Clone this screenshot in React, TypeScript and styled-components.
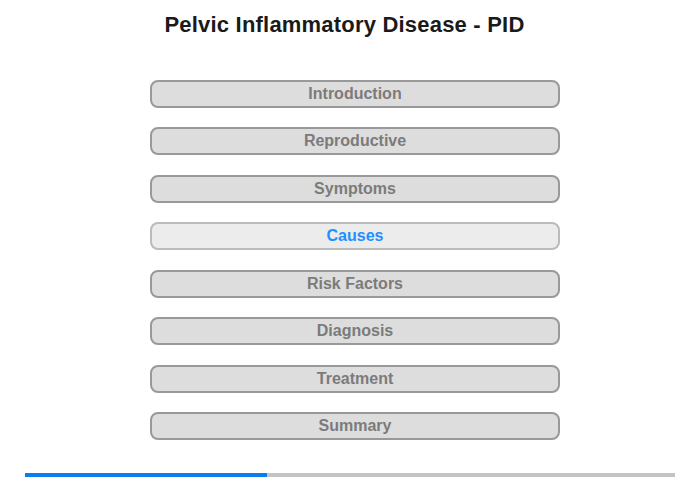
import React from "react";
import styled, { createGlobalStyle } from "styled-components";

const Global = createGlobalStyle`
  html, body { margin: 0; padding: 0; background: #fff; }
  body { font-family: "Liberation Sans", Arial, sans-serif; }
`;

const Page = styled.div`
  width: 700px;
  height: 480px;
  display: flex;
  flex-direction: column;
  align-items: center;
  box-sizing: border-box;
`;

const Title = styled.h1`
  margin: 12px 0 0 -11px;
  font-size: 22px;
  line-height: 26px;
  letter-spacing: 0.2px;
  font-weight: bold;
  color: #1a1a1a;
  text-align: center;
`;

const Menu = styled.nav`
  margin: 42px 0 0 10px;
  display: flex;
  flex-direction: column;
  gap: 19.43px;
`;

const Item = styled.div<{ $active?: boolean }>`
  box-sizing: border-box;
  width: 410px;
  height: 28px;
  border: 2px solid ${(p) => (p.$active ? "#bbbbbb" : "#999999")};
  border-radius: 8px;
  background: ${(p) => (p.$active ? "#ececec" : "#dddddd")};
  color: ${(p) => (p.$active ? "#1e90ff" : "#7b7b7b")};
  font-size: 16px;
  font-weight: bold;
  display: flex;
  align-items: center;
  justify-content: center;
  cursor: pointer;
`;

const Progress = styled.div`
  margin-top: auto;
  margin-bottom: 3px;
  width: 650px;
  height: 4px;
  background: #c4c4c4;
  display: flex;
`;

const Fill = styled.div`
  height: 100%;
  background: #0a7ef0;
`;

const items = [
  "Introduction",
  "Reproductive",
  "Symptoms",
  "Causes",
  "Risk Factors",
  "Diagnosis",
  "Treatment",
  "Summary",
];

export default function App() {
  return (
    <Page>
      <Global />
      <Title>Pelvic Inflammatory Disease - PID</Title>
      <Menu>
        {items.map((t) => (
          <Item key={t} $active={t === "Causes"}>
            {t}
          </Item>
        ))}
      </Menu>
      <Progress>
        <Fill style={{ width: `${(242 / 650) * 100}%` }} />
      </Progress>
    </Page>
  );
}
